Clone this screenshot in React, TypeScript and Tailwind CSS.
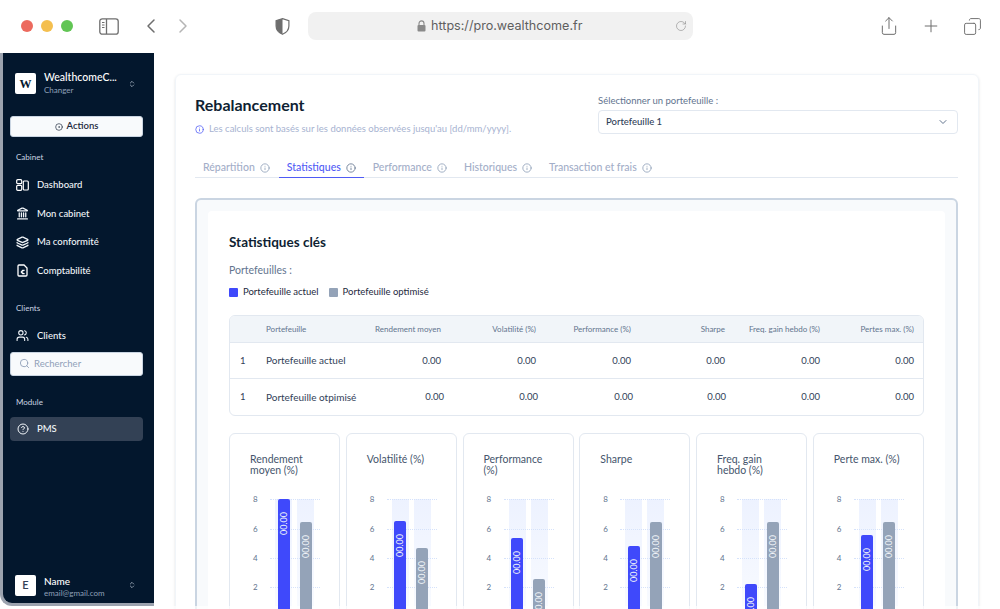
import {
  ChevronDown,
  ChevronLeft,
  ChevronRight,
  ChevronsUpDown,
  CircleDot,
  CircleHelp,
  Copy,
  Info,
  Landmark,
  Layers,
  Plus,
  RotateCw,
  Search,
  Share,
  Users,
} from "lucide-react";
import type { ReactNode } from "react";

const tabs = ["Répartition", "Statistiques", "Performance", "Historiques", "Transaction et frais"];

const headers = ["Rendement moyen", "Volatilité (%)", "Performance (%)", "Sharpe", "Freq. gain hebdo (%)", "Pertes max. (%)"];

const secondRowOffsets = ["-mr-[3px]", "-mr-[2px]", "-mr-[2px]", "-mr-[1px]", "mr-0", "mr-0"];

// heights in px, the axis runs 14.6px per unit
const charts = [
  { title: "Rendement moyen (%)", current: 117, optimised: 94 },
  { title: "Volatilité (%)", current: 95, optimised: 68 },
  { title: "Performance (%)", current: 78, optimised: 37 },
  { title: "Sharpe", current: 70, optimised: 94 },
  { title: "Freq. gain hebdo (%)", current: 32, optimised: 94 },
  { title: "Perte max. (%)", current: 81, optimised: 94 },
];

function SidebarToggleIcon() {
  return (
    <svg width="20" height="17" viewBox="0 0 20 17" fill="none" stroke="#6e6e6e" strokeWidth="1.3">
      <rect x="0.8" y="0.8" width="18.4" height="15.4" rx="2.5" />
      <path d="M7.5 1v15" />
      <path d="M3 4.5h2.5M3 7h2.5M3 9.5h2.5" strokeWidth="1" />
    </svg>
  );
}

function ShieldIcon() {
  return (
    <svg width="15" height="17" viewBox="0 0 15 17">
      <path d="M7.5 0.7 13.9 2.6V8c0 4-2.8 6.8-6.4 8.3C3.9 14.8 1.1 12 1.1 8V2.6Z" fill="none" stroke="#6e6e6e" strokeWidth="1.2" />
      <path d="M7.5 0.7V16.3C3.9 14.8 1.1 12 1.1 8V2.6Z" fill="#6e6e6e" />
    </svg>
  );
}

function LockIcon() {
  return (
    <svg width="9" height="12" viewBox="0 0 9 12">
      <path d="M2 5V3.4a2.5 2.5 0 0 1 5 0V5" fill="none" stroke="#8a8a8a" strokeWidth="1.1" />
      <rect x="0.5" y="5" width="8" height="6.5" rx="1" fill="#8a8a8a" />
    </svg>
  );
}

function DashboardIcon() {
  return (
    <svg width="13" height="12" viewBox="0 0 13 12" fill="none" stroke="#fff" strokeWidth="1.2">
      <rect x="0.7" y="0.7" width="5" height="4" rx="1" />
      <rect x="0.7" y="6.3" width="5" height="5" rx="1" />
      <rect x="7.3" y="2" width="5" height="9" rx="1" />
    </svg>
  );
}

function AccountingIcon() {
  return (
    <svg width="11" height="13" viewBox="0 0 11 13" fill="none" stroke="#fff" strokeWidth="1.3">
      <path d="M1 2a1 1 0 0 1 1-1h5l3 3v7a1 1 0 0 1-1 1H2a1 1 0 0 1-1-1Z" />
      <path d="M7.6 6.4H5.6L4.2 8l1.4 1.6h2M3.8 8h2.6" strokeWidth="1.1" />
    </svg>
  );
}

function NavItem({ icon, label, className }: { icon: ReactNode; label: string; className?: string }) {
  return (
    <div className={`flex h-6 items-center gap-[8px] rounded px-[6px] text-[9.5px] font-medium text-slate-100 ${className ?? ""}`}>
      <span className="flex w-[13px] justify-center">{icon}</span>
      {label}
    </div>
  );
}

function Sidebar() {
  return (
    <aside className="flex h-[553px] w-[154px] shrink-0 flex-col rounded-bl-xl border-b-[3px] border-l-[3px] border-[#9ca3af] bg-[#03172d] pr-[11px] pl-[7px]">
      <div className="mt-[18px] flex items-center pl-[5px]">
        <div className="flex h-[21px] w-[21px] items-center justify-center rounded-[2px] bg-white text-[12px] font-bold text-[#03172d] [font-family:'Liberation_Serif',serif]">
          W
        </div>
        <div className="ml-2 w-[84px]">
          <div className="text-[10.5px] leading-[13px] font-medium whitespace-nowrap text-white">WealthcomeC...</div>
          <div className="text-[8px] leading-[12px] text-slate-400">Changer</div>
        </div>
        <ChevronsUpDown size={8} className="text-slate-300" />
      </div>
      <button className="mt-[20px] flex h-[21px] items-center justify-center gap-[4px] rounded-[3px] border border-slate-300 bg-slate-50 text-[9.5px] font-semibold text-slate-800">
        <CircleDot size={8} />
        Actions
      </button>
      <div className="mt-[14px] pl-[6px] text-[8px] leading-[12px] text-slate-300">Cabinet</div>
      <div className="mt-[10px] flex flex-col gap-[4.67px]">
        <NavItem icon={<DashboardIcon />} label="Dashboard" />
        <NavItem icon={<Landmark size={13} strokeWidth={2.4} />} label="Mon cabinet" />
        <NavItem icon={<Layers size={13} strokeWidth={2.4} />} label="Ma conformité" />
        <NavItem icon={<AccountingIcon />} label="Comptabilité" />
      </div>
      <div className="mt-[19px] pl-[6px] text-[8px] leading-[12px] text-slate-300">Clients</div>
      <NavItem icon={<Users size={13} />} label="Clients" className="mt-[10px]" />
      <div className="mt-[4px] flex h-6 items-center gap-[4px] rounded-[3px] border border-slate-300 bg-slate-50 pl-[8px] text-[9.5px] text-slate-400">
        <Search size={11} />
        Rechercher
      </div>
      <div className="mt-[20px] pl-[6px] text-[8px] leading-[12px] text-slate-300">Module</div>
      <NavItem icon={<CircleHelp size={12} />} label="PMS" className="mt-[9px] bg-[#334155]" />
      <div className="mt-auto mb-[4px] flex items-center pl-[5px]">
        <div className="flex h-[21px] w-[21px] items-center justify-center rounded-[2px] bg-white text-[11px] font-semibold text-slate-700">
          E
        </div>
        <div className="ml-2 w-[84px] pt-[4px]">
          <div className="text-[10px] leading-[12px] font-medium text-white">Name</div>
          <div className="text-[8px] leading-[12px] text-slate-400">email@gmail.com</div>
        </div>
        <ChevronsUpDown size={8} className="text-slate-300" />
      </div>
    </aside>
  );
}

function Bar({ height, color }: { height: number; color: string }) {
  return (
    <div className="flex h-full w-[17px] items-end justify-center bg-gradient-to-b from-[#edf2ff] to-[#f9fbff]">
      <div
        className={`relative z-10 flex w-[12px] justify-center rounded-t-[2px] pt-[13px] ${color}`}
        style={{ height }}
      >
        <span className="rotate-180 self-start text-[9px] leading-[12px] text-slate-100 [writing-mode:vertical-rl]">00.00</span>
      </div>
    </div>
  );
}

function ChartCard({ title, current, optimised }: { title: string; current: number; optimised: number }) {
  return (
    <div className="h-[190px] min-w-0 flex-1 rounded-md border border-slate-200 pt-[20px] pl-[20px]">
      <div className="h-[45px] w-[72px] text-[10.5px] leading-[11px] text-slate-600">{title}</div>
      <div className="flex h-[117px]">
        <div className="flex w-[20px] flex-col text-[8px] leading-[0] text-slate-500">
          {[8, 6, 4, 2].map((tick) => (
            <div key={tick} className="h-[29.25px] pl-[3px]">
              {tick}
            </div>
          ))}
        </div>
        <div className="relative flex w-[50px] gap-[5px] px-[5px]">
          <Bar height={current} color="bg-[#3f49fb]" />
          <Bar height={optimised} color="bg-[#94a3b8]" />
          <div className="pointer-events-none absolute inset-0 flex flex-col">
            {[8, 6, 4, 2].map((tick) => (
              <div key={tick} className="h-[29.25px] border-t border-dotted border-[#d5e2fb]" />
            ))}
          </div>
        </div>
      </div>
    </div>
  );
}

function StatsRow({ index, name, offsets, border }: { index: number; name: string; offsets?: string[]; border?: boolean }) {
  return (
    <div
      className={`grid h-[36px] grid-cols-[26px_90px_85px_95px_95px_94px_95px_94px] items-center pl-[10px] text-[9.5px] text-slate-700 ${border ? "border-b border-slate-200" : ""}`}
    >
      <span>{index}</span>
      <span className="text-[10px] whitespace-nowrap">{name}</span>
      {headers.map((header, i) => (
        <span key={header} className={`text-right ${offsets ? offsets[i] : ""}`}>
          0.00
        </span>
      ))}
    </div>
  );
}

export default function App() {
  return (
    <div className="relative flex h-[609px] w-[1000px] flex-col overflow-hidden bg-white [font-family:Lato,sans-serif]">
      {/* barre du navigateur */}
      <header className="flex h-[53px] shrink-0 items-center pb-[1px] text-[#6e6e6e]">
        <div className="ml-[21px] flex gap-2">
          <span className="h-3 w-3 rounded-full bg-[#ec6a5e]" />
          <span className="h-3 w-3 rounded-full bg-[#f4bf4f]" />
          <span className="h-3 w-3 rounded-full bg-[#61c554]" />
        </div>
        <div className="ml-[26px]">
          <SidebarToggleIcon />
        </div>
        <ChevronLeft size={24} strokeWidth={1.5} className="ml-[20px]" />
        <ChevronRight size={24} strokeWidth={1.5} className="ml-[8px] text-[#b5b5b5]" />
        <div className="ml-[80px]">
          <ShieldIcon />
        </div>
        <div className="ml-[18px] flex h-[28px] w-[385px] items-center rounded-lg bg-[#f1f1f1] pl-[109px] text-[12.6px] text-[#5f5f5f] [font-family:Inter,sans-serif]">
          <LockIcon />
          <span className="ml-[5px]">https://pro.wealthcome.fr</span>
          <RotateCw size={12} strokeWidth={1.2} className="mr-[6px] ml-auto text-[#8a8a8a]" />
        </div>
        <Share size={20} strokeWidth={1.2} className="ml-[186px]" />
        <Plus size={20} strokeWidth={1.2} className="ml-[22px]" />
        <Copy size={19} strokeWidth={1.2} className="ml-[22px] -scale-x-100" />
      </header>

      <div className="flex min-h-0 flex-1 items-start">
        <Sidebar />
        <main className="mt-[21px] ml-[21px] w-[804px] rounded-md border border-slate-100 pt-[20px] pr-[20px] pl-[19px] shadow-sm">
          <div className="flex justify-between">
            <div>
              <h1 className="text-[16px] leading-[20px] font-bold text-[#0f1f33]">Rebalancement</h1>
              <p className="mt-[7px] flex items-center gap-[5px] text-[9.5px] text-[#a7b3d1]">
                <Info size={9} className="text-[#4f5bf5]" />
                Les calculs sont basés sur les données observées jusqu'au [dd/mm/yyyy].
              </p>
            </div>
            <div className="w-[360px]">
              <div className="text-[9.5px] leading-[12px] text-slate-500">Sélectionner un portefeuille :</div>
              <div className="mt-[3px] flex h-6 items-center justify-between rounded border border-slate-200 pr-[8px] pl-[7px] text-[9.5px] font-medium text-slate-700">
                Portefeuille 1
                <ChevronDown size={12} className="text-slate-500" />
              </div>
            </div>
          </div>

          <nav className="mt-[22px] flex gap-px border-b border-slate-200">
            {tabs.map((tab) => {
              const active = tab === "Statistiques";
              return (
                <div
                  key={tab}
                  className={`-mb-px flex h-[20px] items-center gap-[5px] border-b px-2 pt-[1px] text-[10.5px] font-medium ${active ? "border-[#4f5bf5] text-[#4f5bf5]" : "border-transparent text-[#a3aec8]"}`}
                >
                  {tab}
                  <Info size={10} className={active ? "text-slate-500" : "text-slate-400"} />
                </div>
              );
            })}
          </nav>

          <section className="mt-[20px] rounded-md border-2 border-slate-300 bg-slate-50 p-[11px] pb-0">
            <div className="rounded-t bg-white px-[21px] pt-[22px]">
              <h2 className="text-[13.5px] leading-[18px] font-bold text-[#0f1f33]">Statistiques clés</h2>
              <div className="mt-[12px] text-[10.5px] leading-[14px] text-slate-500">Portefeuilles :</div>
              <div className="mt-[9px] flex items-center text-[9.5px] leading-[12px] text-slate-800">
                <span className="mr-[5px] h-[9px] w-[9px] rounded-[1px] bg-[#3f49fb]" />
                Portefeuille actuel
                <span className="mr-[5px] ml-[10px] h-[9px] w-[9px] rounded-[1px] bg-[#94a3b8]" />
                Portefeuille optimisé
              </div>

              <div className="mt-[17px] overflow-hidden rounded-md border border-slate-200">
                <div className="grid h-[27px] grid-cols-[26px_90px_85px_95px_95px_94px_95px_94px] items-center border-b border-slate-200 bg-slate-100 pl-[10px] text-[8px] whitespace-nowrap text-slate-500">
                  <span />
                  <span>Portefeuille</span>
                  {headers.map((header) => (
                    <span key={header} className="text-right">
                      {header}
                    </span>
                  ))}
                </div>
                <StatsRow index={1} name="Portefeuille actuel" border />
                <StatsRow index={1} name="Portefeuille otpimisé" offsets={secondRowOffsets} />
              </div>

              <div className="mt-[17px] flex gap-[5.6px]">
                {charts.map((chart) => (
                  <ChartCard key={chart.title} {...chart} />
                ))}
              </div>
            </div>
          </section>
        </main>
      </div>

      {/* voile du bas de la capture */}
      <div className="absolute inset-x-0 bottom-0 h-[3px] bg-white/70" />
    </div>
  );
}
